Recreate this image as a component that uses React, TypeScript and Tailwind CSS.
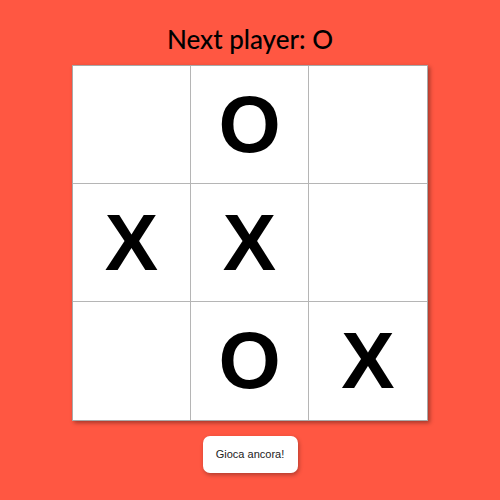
import { useState } from "react";

type Cell = "X" | "O" | null;

const start: Cell[] = [null, "O", null, "X", "X", null, null, "O", "X"];

export default function App() {
  const [squares, setSquares] = useState<Cell[]>(start);
  const xCount = squares.filter((s) => s === "X").length;
  const oCount = squares.filter((s) => s === "O").length;
  const next = xCount > oCount ? "O" : "X";

  const play = (i: number) => {
    if (squares[i]) return;
    const copy = squares.slice();
    copy[i] = next;
    setSquares(copy);
  };

  return (
    <div className="min-h-[500px] w-[500px] bg-[#ff5742] flex flex-col items-center pt-[24px]">
      <h1 className="font-['Lato','DejaVu_Sans',sans-serif] text-[26px] leading-[30px] font-medium text-black">
        Next player: {next}
      </h1>

      <div className="mt-[11px] grid grid-cols-[118px_118px_118px] grid-rows-[118px_118px_118px] bg-white border border-[#a9a9a9] shadow-[2px_2px_4px_rgba(0,0,0,0.35)]">
        {squares.map((s, i) => (
          <button
            key={i}
            onClick={() => play(i)}
            className={`flex items-center justify-center bg-white text-black font-['Liberation_Sans',Arial,sans-serif] text-[80px] leading-none font-bold border-[#b5b5b5] ${
              i % 3 !== 2 ? "border-r" : ""
            } ${i < 6 ? "border-b" : ""}`}
          >
            {s}
          </button>
        ))}
      </div>

      <button
        onClick={() => setSquares(Array(9).fill(null))}
        className="mt-[15px] w-[95px] h-[37px] bg-white rounded-[7px] font-['Liberation_Sans',Arial,sans-serif] text-[11px] text-[#222] shadow-[1px_2px_4px_rgba(0,0,0,0.3)]"
      >
        Gioca ancora!
      </button>
    </div>
  );
}
